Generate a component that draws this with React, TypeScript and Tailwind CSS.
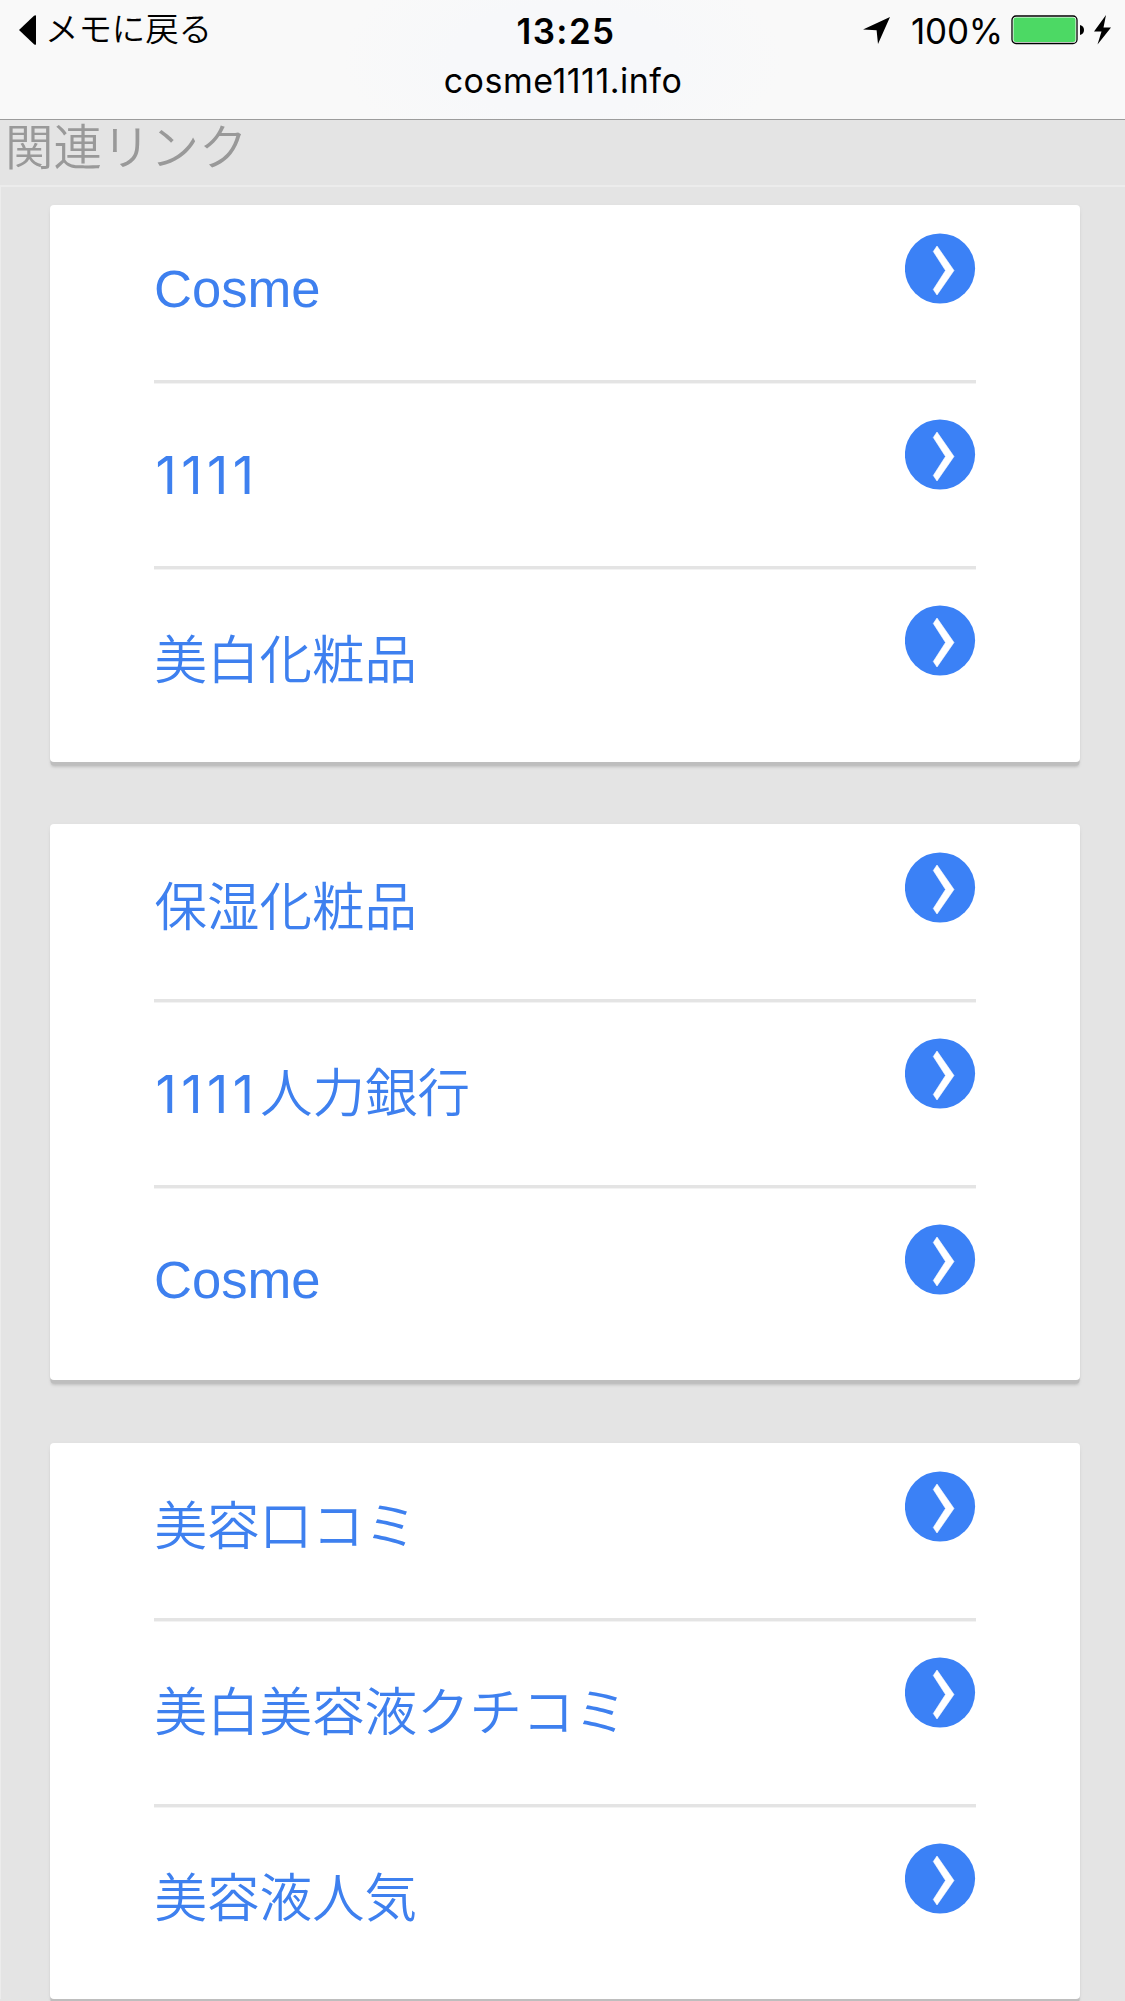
const groups = [
  ["Cosme", "1111", "美白化粧品"],
  ["保湿化粧品", "1111人力銀行", "Cosme"],
  ["美容口コミ", "美白美容液クチコミ", "美容液人気"],
];

function StatusBar() {
  return (
    <header className="h-[120px] shrink-0 border-b border-[#9c9c9c] bg-[#f9f9f9] bg-[radial-gradient(ellipse_220px_110px_at_center,#f7f8fa_50%,#f9f9f9_100%)] text-black">
      <div className="grid h-[60px] grid-cols-3 items-center font-['Inter','Noto_Sans_CJK_JP',sans-serif]">
        <div className="flex items-center pl-[19px]">
          <svg className="h-[30px] w-[17px]" viewBox="0 0 17 30">
            <path d="M0 15 15 0.8Q17 -0.6 17 1V29Q17 30.6 15 29.2Z" />
          </svg>
          <span className="ml-[9px] pb-[3px] text-[33.5px] leading-[56px] font-[350] tracking-[-0.1px]">メモに戻る</span>
        </div>
        <div className="pt-[3px] pl-[7px] text-center text-[35px] leading-[57px] font-semibold tracking-[1.4px]">13:25</div>
        <div className="flex items-center justify-end pr-[14px]">
          <svg className="h-[27px] w-[27px]" viewBox="0 0 27 27">
            <path d="M27 0 15 27 13.6 13.2 0 12.4Z" />
          </svg>
          <span className="ml-[21px] pt-[3px] text-[35px] leading-[57px] tracking-[-0.2px]">100%</span>
          <svg className="ml-[8px] h-[30px] w-[74px]" viewBox="0 0 74 30">
            <rect x="1" y="1" width="65" height="27.5" rx="4" fill="white" stroke="black" strokeWidth="1.3" />
            <rect x="2.5" y="2.5" width="62" height="24.5" rx="2.5" fill="#4cd964" />
            <path d="M69 10Q73 11 73 15T69 20Z" />
          </svg>
          <svg className="ml-[9px] h-[30px] w-[17px]" viewBox="0 0 17 30">
            <path d="M12 0 0 16.5H7.5L3.5 29.5 17 12.5H9.5Z" />
          </svg>
        </div>
      </div>
      <div className="pl-[1px] text-center font-['Inter',sans-serif] text-[34px] leading-[42px] tracking-[0.5px]">cosme1111.info</div>
    </header>
  );
}

function Arrow() {
  return (
    <svg className="h-[71px] w-[71px] shrink-0" viewBox="0 0 71 71">
      <circle cx="35" cy="35.5" r="35.1" fill="#3b81f6" />
      <path d="M32 13 49 37.5 32 62 28.3 56.5 40.5 37.5 28.3 18.5Z" fill="white" stroke="white" strokeWidth="0.6" />
    </svg>
  );
}

/* Digits, Latin and Japanese runs each carry their own face and baseline nudge. */
function Label({ text }: { text: string }) {
  const runs = text.match(/\d+|[A-Za-z]+|[^\dA-Za-z]+/g) ?? [];
  return (
    <a href="#" className="mt-[9px] flex leading-[92px] text-[#3e80ef]">
      {runs.map((run, i) =>
        /\d/.test(run) ? (
          <span key={i} className="pt-px pr-px pl-[1.5px] font-['Inter',sans-serif] text-[52.3px] tracking-[4.5px]">{run}</span>
        ) : /[A-Za-z]/.test(run) ? (
          <span key={i} className="pt-px font-['Liberation_Sans',sans-serif] text-[52.6px]">{run}</span>
        ) : (
          <span key={i} className="-mt-[4px] pl-[0.5px] font-['Noto_Sans_CJK_JP',sans-serif] text-[52.5px] font-[350]">{run}</span>
        ),
      )}
    </a>
  );
}

function Card({ links }: { links: string[] }) {
  return (
    <ul className="h-[556.4px] rounded-[4px] bg-white px-[104px] shadow-[0_4px_0_-0.5px_#bebebe,0_6px_3px_-1px_#bebebe,0_1px_3px_#dadada]">
      {links.map((label) => (
        <li
          key={label}
          className="flex h-[186px] items-start justify-between border-b-[3px] border-[#e4e4e4] pt-[35.8px] shadow-[0_1px_0_#f3f3f3] first:h-[178.1px] first:pt-[28px] last:border-b-0 last:shadow-none"
        >
          <Label text={label} />
          <Arrow />
        </li>
      ))}
    </ul>
  );
}

export default function App() {
  return (
    <div className="flex h-[2001px] w-[1125px] flex-col overflow-hidden bg-[#e4e4e4]">
      <StatusBar />
      <h1 className="h-[65px] shrink-0 pl-[5px] font-['Noto_Sans_CJK_JP',sans-serif] text-[48.5px] leading-[48px] font-[350] text-[#999]">
        関連リンク
      </h1>
      <main className="flex flex-col gap-[62.3px] border-t-2 border-l border-[#ececec] pt-[18.4px] pr-[45px] pl-[49px]">
        {groups.map((links, i) => (
          <Card key={i} links={links} />
        ))}
      </main>
    </div>
  );
}
